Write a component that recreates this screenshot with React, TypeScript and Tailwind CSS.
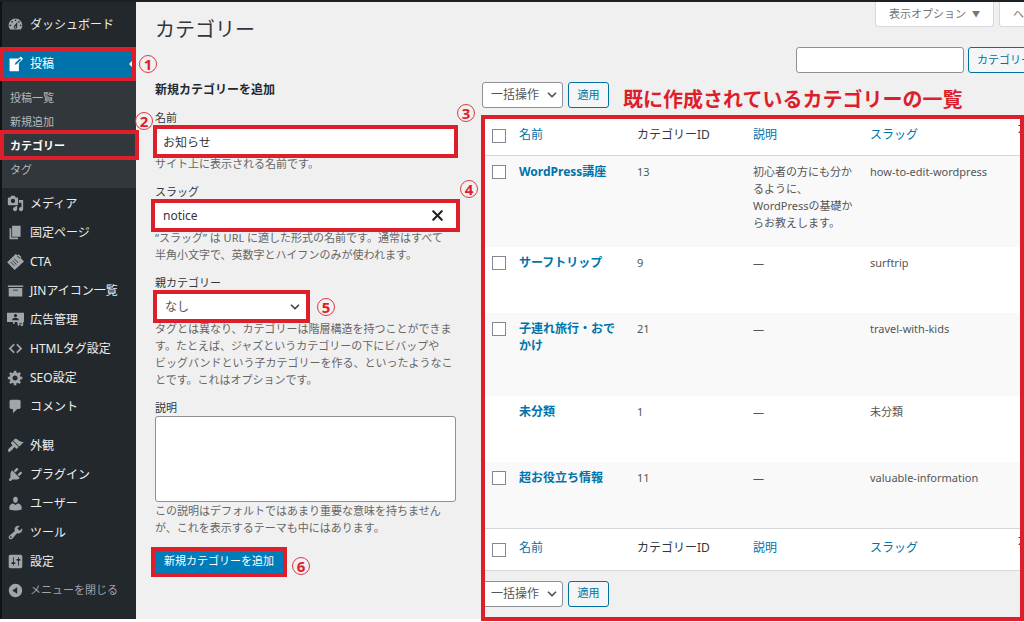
import React from "react";
import { ChevronDown, X } from "lucide-react";

const paths: Record<string, string> = {
  dashboard:
    "M3.76 16h12.48c1.1-1.37 1.76-3.11 1.76-5 0-4.42-3.58-8-8-8s-8 3.58-8 8c0 1.89.66 3.63 1.76 5zM10 4c.55 0 1 .45 1 1s-.45 1-1 1-1-.45-1-1 .45-1 1-1zM6 6c.55 0 1 .45 1 1s-.45 1-1 1-1-.45-1-1 .45-1 1-1zm8 0c.55 0 1 .45 1 1s-.45 1-1 1-1-.45-1-1 .45-1 1-1zm-5.37 5.55L12 7v6c0 1.1-.9 2-2 2s-2-.9-2-2c0-.57.24-1.08.63-1.45zM4 10c.55 0 1 .45 1 1s-.45 1-1 1-1-.45-1-1 .45-1 1-1zm12 0c.55 0 1 .45 1 1s-.45 1-1 1-1-.45-1-1 .45-1 1-1zm-5 3c0-.55-.45-1-1-1s-1 .45-1 1 .45 1 1 1 1-.45 1-1z",
  write:
    "M16.89 1.2l1.41 1.41c.39.39.39 1.02 0 1.41L14 8.33V18H3V3h10.67l1.8-1.8c.4-.39 1.03-.4 1.42 0zm-5.66 8.48l5.37-5.36-1.42-1.42-5.36 5.37-.71 2.12z",
  media:
    "M13 11V4c0-.55-.45-1-1-1h-1.67L9 1H5L3.67 3H2c-.55 0-1 .45-1 1v7c0 .55.45 1 1 1h10c.55 0 1-.45 1-1zM7 4.5c1.38 0 2.5 1.12 2.5 2.5S8.38 9.5 7 9.5 4.5 8.38 4.5 7 5.62 4.5 7 4.5zM14 6h5v10.5c0 1.38-1.12 2.5-2.5 2.5S14 17.88 14 16.5s1.12-2.5 2.5-2.5c.17 0 .34.02.5.05V9h-3V6zm-4 8.05V13h2v3.5c0 1.38-1.12 2.5-2.5 2.5S7 17.88 7 16.5 8.12 14 9.5 14c.17 0 .34.02.5.05z",
  page: "M6 15V2h10v13H6zm-1 1h8v2H3V5h2v11z",
  tickets:
    "M10.2 1.2l2 1.500 1.300-1.300 3.300 2.900-.9 1.400 4.100 4.300L9 20 .2 11 10.2 1.2zM12 3.900l2.800 2.700.6-.7-2.700-2.600zM4 10.800l4.800 4.900.500-.500-4.800-4.900zM6 8.900l4.800 4.800.500-.500L6.500 8.400zM8 6.900l4.800 4.800.500-.500L8.500 6.400z",
  archive: "M19 4v2H1V4h18zM2 7h16v10H2V7zm11 3V9H7v1h6z",
  ads: "M0 2h20v11h-1v4l-2 1-2-2-2 2-1-5H9v2H7v-2H0V2zm10 1.500a1.900 1.900 0 1 0 0 3.800 1.900 1.900 0 0 0 0-3.800zM6 11h8c0-2-1.500-3-4-3s-4 1-4 3zM14.500 14.500h3v1h-3z",
  code: "M9 6l-4 4 4 4-1 2-6-6 6-6zm2 8l4-4-4-4 1-2 6 6-6 6z",
  gear: "M18 12h-2.18c-.17.7-.44 1.35-.81 1.93l1.54 1.54-2.1 2.1-1.54-1.54c-.58.36-1.23.63-1.91.79V19H8v-2.18c-.68-.16-1.33-.43-1.91-.79l-1.54 1.54-2.12-2.12 1.54-1.54c-.36-.58-.63-1.23-.79-1.91H1V9.03h2.17c.16-.7.44-1.35.8-1.94L2.43 5.55l2.1-2.1 1.54 1.54c.58-.37 1.24-.64 1.93-.81V2h3v2.18c.68.16 1.33.43 1.91.79l1.54-1.54 2.12 2.12-1.54 1.54c.36.59.64 1.24.8 1.94H18V12zm-8.5 1.5c1.66 0 3-1.34 3-3s-1.34-3-3-3-3 1.34-3 3 1.34 3 3 3z",
  comment:
    "M5 2h9c1.1 0 2 .9 2 2v7c0 1.1-.9 2-2 2h-2l-5 5v-5H5c-1.1 0-2-.9-2-2V4c0-1.1.9-2 2-2z",
  brush:
    "M14.48 11.06L7.41 3.99l1.5-1.5c.5-.56 2.3-.47 3.51.32 1.21.8 1.43 1.28 2.91 2.1 1.18.64 2.45 1.26 4.45.85zm-.71.71L6.7 4.7 4.93 6.47c-.39.39-.39 1.02 0 1.41l1.06 1.06c.39.39.39 1.03 0 1.42-.6.6-1.43 1.11-2.21 1.69-.35.26-.7.53-1.01.84C1.43 14.23.4 16.08 1.4 17.07c.99 1 2.84-.03 4.18-1.36.31-.31.58-.66.85-1.02.57-.78 1.08-1.61 1.69-2.21.39-.39 1.02-.39 1.41 0l1.06 1.06c.39.39 1.02.39 1.41 0z",
  plug: "M13.11 4.36L9.87 7.6 8 5.73l3.24-3.24c.35-.34 1.05-.2 1.56.32.52.51.66 1.21.31 1.55zm-8 1.77l.91-1.12 9.01 9.01-1.19.84c-.71.71-2.63 1.16-3.82 1.16H6.14L4.9 17.26c-.59.59-1.54.59-2.12 0-.59-.58-.59-1.53 0-2.12l1.24-1.24v-3.88c0-1.13.4-3.19 1.09-3.89zm7.26 3.97l3.24-3.24c.34-.35 1.04-.21 1.55.31.52.51.66 1.21.31 1.55l-3.24 3.25z",
  user: "M10 9.25c-2.27 0-2.73-3.44-2.73-3.44C7 4.02 7.82 2 9.97 2c2.16 0 2.98 2.02 2.71 3.81 0 0-.41 3.44-2.68 3.44zm0 2.57L12.72 10c2.39 0 4.52 2.33 4.52 4.53v2.49s-3.65 1.13-7.24 1.13c-3.65 0-7.24-1.13-7.24-1.13v-2.49c0-2.25 1.94-4.48 4.47-4.48z",
  wrench:
    "M16.68 9.77c-1.34 1.34-3.3 1.67-4.95.99l-5.41 6.52c-.99.99-2.59.99-3.58 0s-.99-2.59 0-3.57l6.52-5.42c-.68-1.65-.35-3.61.99-4.95 1.28-1.28 3.12-1.62 4.72-1.06l-2.89 2.89 2.82 2.82 2.86-2.87c.53 1.58.18 3.39-1.08 4.65zM3.81 16.21c.4.39 1.04.39 1.43 0 .4-.4.4-1.04 0-1.43-.39-.4-1.03-.4-1.43 0-.39.39-.39 1.03 0 1.43z",
  sliders:
    "M18 16V4c0-1.1-.9-2-2-2H4c-1.1 0-2 .9-2 2v12c0 1.1.9 2 2 2h12c1.1 0 2-.9 2-2zM8 11h1c.55 0 1 .45 1 1s-.45 1-1 1H8v1.5c0 .28-.22.5-.5.5s-.5-.22-.5-.5V13H6c-.55 0-1-.45-1-1s.45-1 1-1h1V5.5c0-.28.22-.5.5-.5s.5.22.5.5V11zm5-2h-1c-.55 0-1-.45-1-1s.45-1 1-1h1V5.5c0-.28.22-.5.5-.5s.5.22.5.5V7h1c.55 0 1 .45 1 1s-.45 1-1 1h-1v5.5c0 .28-.22.5-.5.5s-.5-.22-.5-.5V9z",
  collapse:
    "M10 2.16c4.33 0 7.84 3.51 7.84 7.84s-3.51 7.84-7.84 7.84S2.16 14.33 2.16 10 5.71 2.16 10 2.16zm2 11.72V6.12L6.18 9.97z",
};

function Icon({ name }: { name: string }) {
  return (
    <svg viewBox="0 0 20 20" className="size-[17px] shrink-0" fill="currentColor" fillRule="evenodd" aria-hidden="true">
      <path d={paths[name]} />
    </svg>
  );
}

function Mark({ n, className }: { n: number; className: string }) {
  return (
    <span
      className={`absolute z-20 flex size-[18px] items-center justify-center rounded-full border border-[#dc3a44] text-[15px] leading-4 font-bold text-[#dc1f2b] ${className}`}
    >
      {n}
    </span>
  );
}

function MenuItem({ icon, label }: { icon: string; label: string }) {
  return (
    <li>
      <a href="#" className="flex h-[29px] items-center gap-1.5 pl-1 text-xs whitespace-nowrap text-[#eee]">
        <span className="flex text-[#a0a5aa]">
          <Icon name={icon} />
        </span>
        {label}
      </a>
    </li>
  );
}

const menuA = [
  ["media", "メディア"],
  ["page", "固定ページ"],
  ["tickets", "CTA"],
  ["archive", "JINアイコン一覧"],
  ["ads", "広告管理"],
  ["code", "HTMLタグ設定"],
  ["gear", "SEO設定"],
  ["comment", "コメント"],
];
const menuB = [
  ["brush", "外観"],
  ["plug", "プラグイン"],
  ["user", "ユーザー"],
  ["wrench", "ツール"],
  ["sliders", "設定"],
];
const submenu = ["投稿一覧", "新規追加", "カテゴリー", "タグ"];

function Sidebar() {
  return (
    <nav className="relative z-10 w-[136px] shrink-0 border-l-2 border-[#0f1316] bg-[#23282d] pt-2">
      <ul className="pl-px">
        <MenuItem icon="dashboard" label="ダッシュボード" />
      </ul>
      <div className="relative mt-2 -ml-0.5">
        <a
          href="#"
          className="flex h-[34px] items-center gap-1.5 border-4 border-[#dc1f2b] bg-[#0073aa] pl-[3px] text-xs text-white"
        >
          <Icon name="write" />
          投稿
          <span className="ml-auto size-0 border-y-3 border-r-3 border-y-transparent border-r-white" />
        </a>
        <Mark n={1} className="top-2 left-[139px]" />
      </div>
      <ul className="bg-[#32373c] pt-[5px] pb-1.5">
        {submenu.map((s) => (
          <li key={s} className="relative">
            <a
              href="#"
              className={`flex h-6 items-center pl-2 text-[11px] ${s === "カテゴリー" ? "font-bold text-white" : "text-[#b4b9be]"}`}
            >
              {s}
            </a>
            {s === "カテゴリー" && (
              <>
                <span className="absolute -top-1 -right-[3px] -bottom-0.5 -left-0.5 border-4 border-[#dc1f2b]" />
                <Mark n={2} className="-top-[22px] left-[133px]" />
              </>
            )}
          </li>
        ))}
      </ul>
      <ul className="pt-px pl-px">
        {menuA.map(([i, l]) => (
          <MenuItem key={l} icon={i} label={l} />
        ))}
      </ul>
      <ul className="pt-2.5 pl-px">
        {menuB.map(([i, l]) => (
          <MenuItem key={l} icon={i} label={l} />
        ))}
      </ul>
      <button className="flex h-[29px] items-center gap-1.5 pl-[5px] text-[11px] whitespace-nowrap text-[#a0a5aa]">
        <Icon name="collapse" />
        メニューを閉じる
      </button>
    </nav>
  );
}

const labelCls = "block text-[11px] leading-4 text-[#32373c]";
const helpCls = "text-[11px] leading-[17px] text-[#666]";

function AddForm() {
  return (
    <section className="w-[301px] shrink-0 pt-3.5">
      <h1 className="text-xl leading-7 text-[#32373c]">カテゴリー</h1>
      <h2 className="mt-[38px] text-xs leading-4 font-bold text-[#23282d]">新規カテゴリーを追加</h2>
      <form className="mt-3 flex flex-col gap-3" onSubmit={(e) => e.preventDefault()}>
        <div>
          <label htmlFor="name" className={labelCls}>
            名前
          </label>
          <div className="relative mx-0.5 mt-[3px] mb-px flex">
            <input
              id="name"
              defaultValue="お知らせ"
              className="h-[25px] w-full bg-white px-1.5 text-xs text-[#32373c] outline-4 outline-[#dc1f2b]"
            />
            <Mark n={3} className="-top-[25px] -right-[21px]" />
          </div>
          <p className={helpCls}>サイト上に表示される名前です。</p>
        </div>
        <div>
          <label htmlFor="slug" className={labelCls}>
            スラッグ
          </label>
          <div className="relative mt-[3px] mb-px flex">
            <input
              id="slug"
              defaultValue="notice"
              className="h-[25px] w-full bg-white px-2 text-xs text-[#32373c] outline-4 outline-[#dc1f2b]"
            />
            <button type="button" aria-label="消去" className="absolute top-1 right-2.5">
              <X className="size-[17px] text-[#222]" strokeWidth={3} />
            </button>
            <Mark n={4} className="-top-[23px] -right-[22px]" />
          </div>
          <p className={helpCls}>
            “スラッグ” は URL に適した形式の名前です。通常はすべて
            <br />
            半角小文字で、英数字とハイフンのみが使われます。
          </p>
        </div>
        <div>
          <label htmlFor="parent" className={labelCls}>
            親カテゴリー
          </label>
          <div className="relative mx-0.5 mt-[3px] mb-px flex w-[149px]">
            <select
              id="parent"
              className="h-[25px] w-full appearance-none bg-white px-2 text-xs text-[#555] outline-4 outline-[#dc1f2b]"
            >
              <option>なし</option>
            </select>
            <ChevronDown className="pointer-events-none absolute top-1.5 right-1 size-3.5 text-[#444]" strokeWidth={3} />
            <Mark n={5} className="top-1 -right-[29px]" />
          </div>
          <p className={helpCls}>
            タグとは異なり、カテゴリーは階層構造を持つことができま
            <br />
            す。たとえば、ジャズというカテゴリーの下にビバップや
            <br />
            ビッグバンドという子カテゴリーを作る、といったようなこ
            <br />
            とです。これはオプションです。
          </p>
        </div>
        <div>
          <label htmlFor="desc" className={labelCls}>
            説明
          </label>
          <textarea id="desc" className="block h-[86px] w-full resize-none rounded-[3px] border border-[#8c9196] bg-white" />
          <p className={helpCls}>
            この説明はデフォルトではあまり重要な意味を持ちません
            <br />
            が、これを表示するテーマも中にはあります。
          </p>
        </div>
        <div className="relative mt-[3px] flex">
          <button className="h-[22px] bg-[#007cba] px-[9px] pb-0.5 text-[11px] leading-4 text-white outline-4 outline-[#dc1f2b]">
            新規カテゴリーを追加
          </button>
          <Mark n={6} className="top-1.5 left-[137px]" />
        </div>
      </form>
    </section>
  );
}

function BulkActions() {
  return (
    <div className="flex h-[26px] gap-[5px]">
      <div className="relative -ml-0.5 flex">
        <select
          aria-label="一括操作を選択"
          className="w-[81px] appearance-none rounded-[3px] border border-[#8c9196] bg-white pl-2 text-xs text-[#555]"
        >
          <option>一括操作</option>
        </select>
        <ChevronDown className="pointer-events-none absolute top-1.5 right-1 size-3.5 text-[#555]" strokeWidth={3} />
      </div>
      <button className="w-[41px] rounded-[3px] border border-[#0071a1] bg-[#f3f5f6] text-[11px] text-[#0071a1]">適用</button>
    </div>
  );
}

const rows = [
  {
    name: "WordPress講座",
    id: 13,
    desc: ["初心者の方にも分か", "るように、", "WordPressの基礎か", "らお教えします。"],
    slug: "how-to-edit-wordpress",
    check: true,
  },
  { name: "サーフトリップ", id: 9, desc: ["—"], slug: "surftrip", check: true },
  { name: "子連れ旅行・おでかけ", id: 21, desc: ["—"], slug: "travel-with-kids", check: true },
  { name: "未分類", id: 1, desc: ["—"], slug: "未分類", check: false },
  { name: "超お役立ち情報", id: 11, desc: ["—"], slug: "valuable-information", check: true },
];

function Check({ label }: { label: string }) {
  return (
    <input type="checkbox" aria-label={label} className="block size-3.5 appearance-none border border-[#7e8993] bg-white" />
  );
}

function HeadRow() {
  return (
    <tr className="bg-white text-left text-xs text-[#32373c]">
      <td className="pt-px pl-2">
        <Check label="すべて選択" />
      </td>
      <th className="pb-0.5 font-normal">
        <a href="#" className="text-[#0073aa]">名前</a>
      </th>
      <th className="pb-0.5 font-normal">カテゴリーID</th>
      <th className="pb-0.5 font-normal">
        <a href="#" className="text-[#0073aa]">説明</a>
      </th>
      <th className="pb-0.5 font-normal">
        <a href="#" className="text-[#0073aa]">スラッグ</a>
      </th>
      <th className="pt-1 align-top font-normal">カウント</th>
    </tr>
  );
}

function CategoryTable() {
  return (
    <table className="w-full min-w-[590px] table-fixed border-collapse">
      <colgroup>
        <col className="w-[35px]" />
        <col className="w-[118px]" />
        <col className="w-[116px]" />
        <col className="w-[117px]" />
        <col className="w-[147px]" />
        <col />
      </colgroup>
      <thead className="h-[38px] border-b border-[#d5d8dc]">
        <HeadRow />
      </thead>
      <tbody>
        {rows.map((r) => (
          <tr key={r.name} className="bg-white align-top text-[11px] leading-[17px] text-[#555] odd:bg-[#f9f9f9]">
            <td className="pt-[9px] pl-2">{r.check && <Check label={r.name} />}</td>
            <td className="pt-[7px] pr-5 pb-[42px] text-xs leading-[17px]">
              <a href="#" className="font-bold text-[#0073aa]">{r.name}</a>
            </td>
            <td className="pt-[7px]">{r.id}</td>
            <td className="pt-[7px] pb-4 whitespace-nowrap">
              {r.desc.map((d) => (
                <div key={d}>{d}</div>
              ))}
            </td>
            <td className="pt-[7px]">{r.slug}</td>
            <td />
          </tr>
        ))}
      </tbody>
      <tfoot className="h-[42px] border-y border-[#d5d8dc]">
        <HeadRow />
      </tfoot>
    </table>
  );
}

function ListPanel() {
  return (
    <section className="min-w-0 flex-1">
      <div className="flex min-w-[590px] justify-end gap-[5px] text-[11px] text-[#72777c]">
        <button className="flex h-[25px] items-center gap-1.5 rounded-b-[3px] border border-t-0 border-[#d5d8dc] bg-white px-[13px]">
          表示オプション <span className="text-[8px]">▼</span>
        </button>
        <button className="flex h-[25px] items-center gap-1.5 rounded-b-[3px] border border-t-0 border-[#d5d8dc] bg-white px-[13px]">
          ヘルプ <span className="text-[8px]">▼</span>
        </button>
      </div>
      <form className="mt-5 flex min-w-[590px] justify-end gap-1" onSubmit={(e) => e.preventDefault()}>
        <input
          type="search"
          aria-label="カテゴリーを検索"
          className="h-[26px] w-[168px] rounded-[3px] border border-[#8c9196] bg-white px-2 text-xs"
        />
        <button className="h-[26px] rounded-[3px] border border-[#0071a1] bg-[#f3f5f6] px-2 text-[11px] whitespace-nowrap text-[#0071a1]">
          カテゴリーを検索
        </button>
      </form>
      <div className="mt-[9px] flex gap-3.5">
        <BulkActions />
        <p className="pt-1.5 text-xl leading-6 font-bold whitespace-nowrap text-[#dc1f2b]">
          既に作成されているカテゴリーの一覧
        </p>
      </div>
      <div className="relative mt-[5px]">
        <CategoryTable />
        <div className="mt-2.5">
          <BulkActions />
        </div>
        <span className="pointer-events-none absolute -top-0.5 right-0 -bottom-3.5 -left-[3px] border-4 border-[#dc1f2b]" />
      </div>
    </section>
  );
}

export default function App() {
  return (
    <div className="flex min-h-screen flex-col overflow-hidden border-t-2 border-[#1d2125] bg-white font-['Noto_Sans','Noto_Sans_CJK_JP',sans-serif]">
      <div className="mb-[3px] flex flex-1">
        <Sidebar />
        <main className="flex min-w-0 flex-1 gap-7 bg-[#f0f0f1] pl-[19px]">
          <AddForm />
          <ListPanel />
        </main>
      </div>
    </div>
  );
}
